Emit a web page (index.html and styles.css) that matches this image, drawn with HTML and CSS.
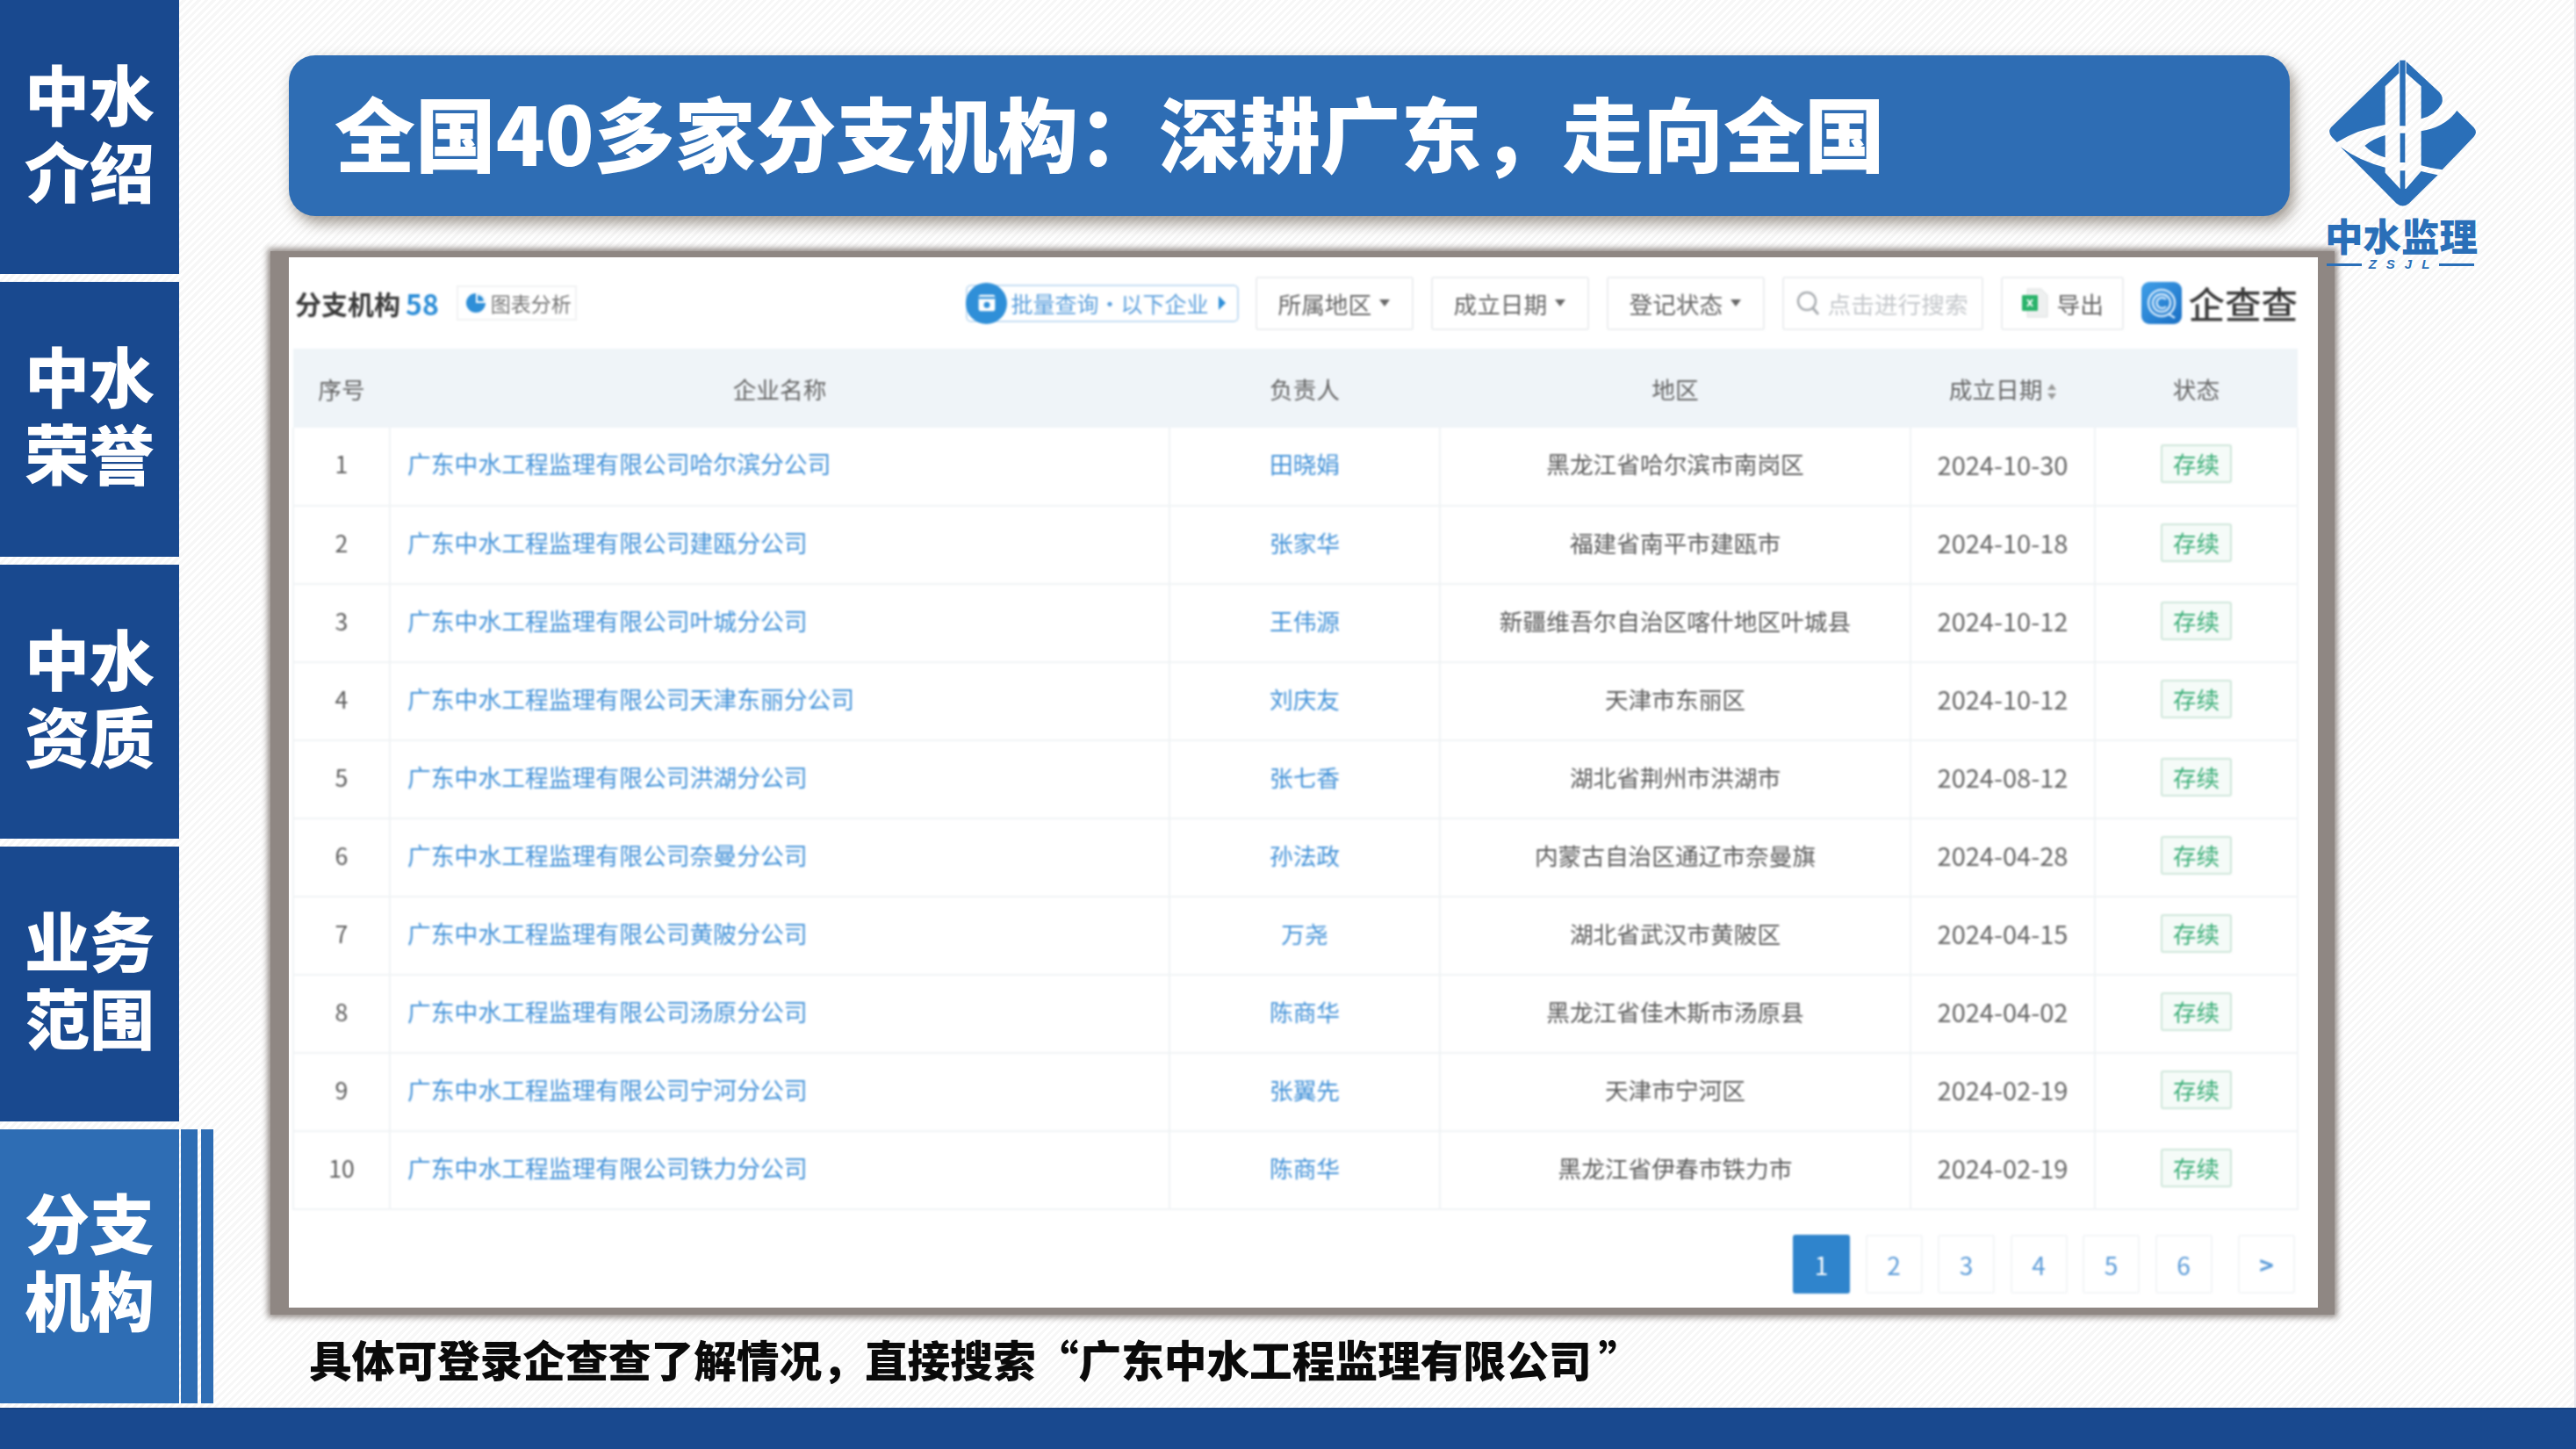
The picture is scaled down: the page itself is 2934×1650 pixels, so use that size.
FILE: index.html
```html
<!DOCTYPE html>
<html lang="zh-CN">
<head>
    <meta charset="UTF-8">
    <title>分支机构</title>
    <link rel="stylesheet" href="styles.css">
</head>
<body>
<div class="slide">
    <div class="content">
        <div class="sidebar">
            <div class="nav-row"><div class="nav-item">中水<br>介绍</div></div>
            <div class="nav-row"><div class="nav-item">中水<br>荣誉</div></div>
            <div class="nav-row"><div class="nav-item">中水<br>资质</div></div>
            <div class="nav-row"><div class="nav-item">业务<br>范围</div></div>
            <div class="nav-row active">
                <div class="nav-item">分支<br>机构</div>
                <div class="strip strip-wide"></div>
                <div class="strip strip-narrow"></div>
            </div>
        </div>

        <div class="main">
            <div class="header">
                <h1 class="title">全国40多家分支机构：深耕广东，走向全国</h1>
                <div class="logo">
                    <svg class="logo-mark" viewBox="0 0 185 185" width="185" height="185">
                        <g fill="#2a6fb8" transform="scale(0.3333)">
                            <path d="M262 30 L30 255 Q18 270 32 287 L50 306 Q120 262 215 246 L215 115 L262 70 Z"/>
                            <rect x="265" y="26" width="19" height="224"/>
                            <rect x="266" y="275" width="17" height="100"/>
                            <rect x="266" y="403" width="17" height="90"/>
                            <path d="M287 30 L287 70 L338 115 L338 226 Q385 215 408 175 Q416 152 400 135 Z"/>
                            <path d="M338 268 Q420 255 460 198 L518 256 Q532 272 518 287 L410 400 Q370 395 338 385 Z"/>
                            <path d="M145 318 Q170 295 215 282 L215 358 Q170 345 145 318 Z"/>
                            <path d="M62 322 Q130 372 215 392 L215 410 L266 465 L286 465 L338 405 Q365 412 395 418 L296 515 Q275 532 254 515 Z"/>
                        </g>
                    </svg>
                    <div class="logo-name">中水监理</div>
                    <div class="logo-sub"><i></i><span>ZSJL</span><i></i></div>
                </div>
            </div>

            <div class="shot">
                <div class="shot-inner">
                    <div class="toolbar">
                        <div class="toolbar-left">
                            <span class="section-name">分支机构</span>
                            <span class="section-count">58</span>
                            <span class="chart-chip">
                                <svg viewBox="0 0 24 24" width="24" height="24">
                                    <circle cx="12" cy="12" r="11" fill="#2f8fd8"/>
                                    <path d="M12 12 L12 1 A11 11 0 0 1 23 12 Z" fill="#fff"/>
                                    <path d="M14 10 L14 3 A8 8 0 0 1 21 10 Z" fill="#2f8fd8"/>
                                </svg>
                                图表分析
                            </span>
                        </div>
                        <div class="toolbar-right">
                            <div class="batch">
                                <span class="batch-icon">
                                    <svg viewBox="0 0 24 24" width="28" height="28">
                                        <rect x="4" y="4" width="16" height="16" rx="2" fill="#fff"/>
                                        <rect x="4" y="6" width="16" height="2" fill="#2f8fd8"/>
                                        <circle cx="12" cy="14" r="3" fill="#2f8fd8"/>
                                    </svg>
                                </span>
                                <span class="batch-text">批量查询·以下企业</span>
                                <span class="batch-arrow"></span>
                            </div>
                            <div class="tool-btn select">所属地区<span class="caret"></span></div>
                            <div class="tool-btn select">成立日期<span class="caret"></span></div>
                            <div class="tool-btn select">登记状态<span class="caret"></span></div>
                            <div class="tool-btn search">
                                <svg viewBox="0 0 28 28" width="28" height="28">
                                    <circle cx="13" cy="12" r="10" fill="none" stroke="#a9adb1" stroke-width="2.5"/>
                                    <path d="M20 20 L26 27" stroke="#a9adb1" stroke-width="3"/>
                                </svg>
                                点击进行搜索
                            </div>
                            <div class="tool-btn export">
                                <svg viewBox="0 0 30 34" width="30" height="34">
                                    <path d="M6 1 H22 L29 8 V33 H6 Z" fill="#eef0f0" stroke="#dcdfdf"/>
                                    <rect x="0" y="8" width="18" height="18" rx="1" fill="#2bb36b"/>
                                    <path d="M6 13 L12 21 M12 13 L6 21" stroke="#fff" stroke-width="2"/>
                                </svg>
                                导出
                            </div>
                            <div class="brand">
                                <span class="brand-icon">
                                    <svg viewBox="0 0 46 48" width="46" height="48">
                                        <g fill="none" stroke="#cfe6fa" stroke-width="2.5">
                                            <circle cx="23" cy="24" r="15"/>
                                            <circle cx="23" cy="24" r="10"/>
                                            <path d="M28 20 A6 6 0 1 0 28 28"/>
                                            <path d="M30 36 L38 41"/>
                                        </g>
                                    </svg>
                                </span>
                                <span class="brand-name">企查查</span>
                            </div>
                        </div>
                    </div>

                    <table class="branch-table">
                        <colgroup>
                            <col class="col-no"><col class="col-name"><col class="col-person"><col class="col-area"><col class="col-date"><col class="col-state">
                        </colgroup>
                        <thead>
                            <tr>
                                <th>序号</th>
                                <th>企业名称</th>
                                <th>负责人</th>
                                <th>地区</th>
                                <th>成立日期<svg class="sort" viewBox="0 0 10 18" width="10" height="18"><path d="M5 0 L10 7 H0 Z M0 11 H10 L5 18 Z" fill="#9a9a9a"/></svg></th>
                                <th>状态</th>
                            </tr>
                        </thead>
                        <tbody>
                            <tr><td>1</td><td class="name">广东中水工程监理有限公司哈尔滨分公司</td><td class="person">田晓娟</td><td>黑龙江省哈尔滨市南岗区</td><td class="date">2024-10-30</td><td><span class="tag">存续</span></td></tr>
                            <tr><td>2</td><td class="name">广东中水工程监理有限公司建瓯分公司</td><td class="person">张家华</td><td>福建省南平市建瓯市</td><td class="date">2024-10-18</td><td><span class="tag">存续</span></td></tr>
                            <tr><td>3</td><td class="name">广东中水工程监理有限公司叶城分公司</td><td class="person">王伟源</td><td>新疆维吾尔自治区喀什地区叶城县</td><td class="date">2024-10-12</td><td><span class="tag">存续</span></td></tr>
                            <tr><td>4</td><td class="name">广东中水工程监理有限公司天津东丽分公司</td><td class="person">刘庆友</td><td>天津市东丽区</td><td class="date">2024-10-12</td><td><span class="tag">存续</span></td></tr>
                            <tr><td>5</td><td class="name">广东中水工程监理有限公司洪湖分公司</td><td class="person">张七香</td><td>湖北省荆州市洪湖市</td><td class="date">2024-08-12</td><td><span class="tag">存续</span></td></tr>
                            <tr><td>6</td><td class="name">广东中水工程监理有限公司奈曼分公司</td><td class="person">孙法政</td><td>内蒙古自治区通辽市奈曼旗</td><td class="date">2024-04-28</td><td><span class="tag">存续</span></td></tr>
                            <tr><td>7</td><td class="name">广东中水工程监理有限公司黄陂分公司</td><td class="person">万尧</td><td>湖北省武汉市黄陂区</td><td class="date">2024-04-15</td><td><span class="tag">存续</span></td></tr>
                            <tr><td>8</td><td class="name">广东中水工程监理有限公司汤原分公司</td><td class="person">陈商华</td><td>黑龙江省佳木斯市汤原县</td><td class="date">2024-04-02</td><td><span class="tag">存续</span></td></tr>
                            <tr><td>9</td><td class="name">广东中水工程监理有限公司宁河分公司</td><td class="person">张翼先</td><td>天津市宁河区</td><td class="date">2024-02-19</td><td><span class="tag">存续</span></td></tr>
                            <tr><td>10</td><td class="name">广东中水工程监理有限公司铁力分公司</td><td class="person">陈商华</td><td>黑龙江省伊春市铁力市</td><td class="date">2024-02-19</td><td><span class="tag">存续</span></td></tr>
                        </tbody>
                    </table>

                    <div class="pager">
                        <span class="page current">1</span>
                        <span class="page">2</span>
                        <span class="page">3</span>
                        <span class="page">4</span>
                        <span class="page">5</span>
                        <span class="page">6</span>
                        <span class="page next">&gt;</span>
                    </div>
                </div>
            </div>

            <p class="note">具体可登录企查查了解情况，直接搜索<span class="quote-open">“</span>广东中水工程监理有限公司<span class="quote-close">”</span></p>
        </div>
    </div>
    <div class="footer"></div>
</div>
</body>
</html>
```

FILE: styles.css
```css
html, body {
    margin: 0;
    padding: 0;
}

body {
    font-family: "Noto Sans CJK SC", "Noto Sans", sans-serif;
    background: #fff;
}

.slide {
    width: 2934px;
    height: 1650px;
    display: flex;
    flex-direction: column;
    overflow: hidden;
    background: repeating-linear-gradient(135deg, #fff 0 3px, #f7f7f7 3px 6px);
}

.content {
    height: 1603px;
    display: flex;
    border-right: 2px solid #e8e8ee;
    box-sizing: border-box;
}

.footer {
    height: 47px;
    background: #19498f;
    border-top: 2px solid #16407f;
    box-sizing: border-box;
}

/* left navigation */
.sidebar {
    width: 243px;
    height: 1598px;
    display: flex;
    flex-direction: column;
    gap: 9px;
    flex-shrink: 0;
}

.nav-row {
    flex: 1;
    display: flex;
}

.nav-item {
    width: 204px;
    box-sizing: border-box;
    padding-bottom: 15px;
    background: #19498f;
    color: #fff;
    font-size: 74px;
    font-weight: 900;
    line-height: 88px;
    display: flex;
    align-items: center;
    justify-content: center;
    text-align: center;
}

.active .nav-item {
    background: #2e6db4;
}

.strip {
    background: #2e6db4;
}

.strip-wide {
    width: 19px;
    margin-left: 2px;
}

.strip-narrow {
    width: 14px;
    margin-left: 4px;
}

/* header */
.main {
    padding-left: 62px;
    flex: 1;
}

.header {
    display: flex;
    height: 286px;
    padding-top: 63px;
    box-sizing: border-box;
}

.title {
    width: 2279px;
    height: 183px;
    margin: 0 0 0 24px;
    padding-left: 52px;
    box-sizing: border-box;
    background: #2e6db4;
    border-radius: 30px;
    box-shadow: 5px 8px 16px rgba(70, 55, 40, 0.5);
    color: #fff;
    font-size: 91.9px;
    font-weight: 900;
    line-height: 171px;
    white-space: nowrap;
}

.logo {
    position: relative;
    z-index: 2;
    width: 180px;
    margin-left: 37px;
    margin-top: -3px;
    color: #2a6fb8;
    height: 260px;
}

.logo-mark {
    display: block;
}

.logo-name {
    width: 180px;
    margin: 3px 0 0 3px;
    font-size: 43.5px;
    font-weight: 900;
    line-height: 40px;
    white-space: nowrap;
}

.logo-sub {
    display: flex;
    align-items: center;
    margin: 3px 0 0 5px;
    width: 168px;
    gap: 8px;
}

.logo-sub i {
    flex: 1;
    height: 3px;
    background: #2a6fb8;
}

.logo-sub span {
    font-family: "Liberation Sans", sans-serif;
    font-size: 15px;
    font-weight: 700;
    font-style: italic;
    letter-spacing: 11px;
    margin-right: -8px;
    line-height: 20px;
}

/* screenshot card */
.shot {
    width: 2351px;
    height: 1211px;
    margin: 0 0 3px 3px;
    box-sizing: border-box;
    border-style: solid;
    border-color: #8f8783;
    border-width: 7px 19px 8px 21px;
    box-shadow: 0 0 7px 3px #8f8783;
    background: #fff;
}

.shot-inner {
    padding: 0 23px 0 4px;
    filter: blur(0.8px);
    color: #666;
    font-size: 26.7px;
}

.toolbar {
    height: 104px;
    display: flex;
    align-items: center;
    justify-content: space-between;
    box-sizing: border-box;
}

.toolbar-left,
.toolbar-right {
    display: flex;
    align-items: center;
}

.section-name {
    margin-left: 3px;
    font-size: 30px;
    font-weight: 700;
    color: #3b3b3b;
}

.section-count {
    margin-left: 6px;
    font-size: 32px;
    font-weight: 700;
    color: #2f8fd8;
}

.chart-chip {
    margin-left: 20px;
    height: 40px;
    width: 137px;
    box-sizing: border-box;
    border: 2px solid #f1f2f3;
    display: flex;
    align-items: center;
    gap: 5px;
    padding-left: 8px;
    font-size: 23px;
    color: #777;
    white-space: nowrap;
}

.batch {
    position: relative;
    width: 311px;
    height: 43px;
    margin-right: 19px;
    box-sizing: border-box;
    border: 2px solid #c6def3;
    border-radius: 6px;
    display: flex;
    align-items: center;
    padding-left: 49px;
    color: #5b9fdc;
    font-size: 25px;
    white-space: nowrap;
}

.batch-icon {
    position: absolute;
    left: -2px;
    top: -4px;
    width: 47px;
    height: 47px;
    border-radius: 50%;
    background: #2f8fd8;
    display: flex;
    align-items: center;
    justify-content: center;
}

.batch-arrow {
    margin-left: 11px;
    border-left: 8px solid #2f8fd8;
    border-top: 8px solid transparent;
    border-bottom: 8px solid transparent;
}

.tool-btn {
    height: 61px;
    box-sizing: border-box;
    border: 2px solid #eceef0;
    border-radius: 3px;
    display: flex;
    align-items: center;
    margin-right: 20px;
    white-space: nowrap;
}

.select {
    width: 180px;
    padding-left: 23px;
}

.caret {
    margin-left: 9px;
    border-top: 8px solid #666;
    border-left: 6px solid transparent;
    border-right: 6px solid transparent;
}

.search {
    width: 229px;
    padding-left: 13px;
    gap: 8px;
    color: #c5c8cc;
}

.export {
    width: 140px;
    padding-left: 22px;
    gap: 9px;
}

.brand {
    display: flex;
    align-items: center;
    gap: 7px;
}

.brand-icon {
    width: 46px;
    height: 48px;
    border-radius: 9px;
    background: linear-gradient(135deg, #3f9fe8, #1a6fc4);
    display: block;
}

.brand-name {
    font-size: 41.5px;
    font-weight: 500;
    line-height: 48px;
    color: #3a3a3a;
    white-space: nowrap;
}

/* table */
.branch-table {
    width: 2283px;
    table-layout: fixed;
    border-collapse: collapse;
}

.col-no { width: 110px; }
.col-name { width: 888px; }
.col-person { width: 308px; }
.col-area { width: 536px; }
.col-date { width: 210px; }
.col-state { width: 231px; }

.branch-table th {
    height: 90px;
    padding: 0;
    background: #eff4f8;
    font-weight: 400;
    color: #666;
}

.branch-table td {
    height: 89px;
    padding: 0 0 7px;
    text-align: center;
    border: 2px solid #f0f3f5;
    border-top: 0;
    box-sizing: border-box;
    color: #5c5c5c;
}

.branch-table td.name {
    text-align: left;
    padding-left: 19px;
    color: #4392d8;
    font-size: 26.8px;
}

.branch-table td.person {
    color: #4392d8;
}

.branch-table td.date {
    font-size: 29px;
    color: #666;
}

.sort {
    margin-left: 6px;
    vertical-align: -1px;
}

.tag {
    display: inline-block;
    width: 81px;
    height: 44px;
    box-sizing: border-box;
    border: 2px solid #cfe6da;
    border-radius: 3px;
    background: #f5fbf8;
    color: #3cae78;
    font-size: 26.5px;
    line-height: 40px;
    vertical-align: middle;
}

/* pagination */
.pager {
    display: flex;
    justify-content: flex-end;
    gap: 17.5px;
    margin-top: 28px;
    padding-right: 3px;
    padding-bottom: 17px;
}

.page {
    width: 65px;
    height: 67px;
    box-sizing: border-box;
    border: 2px solid #f3f5f7;
    border-radius: 3px;
    display: flex;
    align-items: center;
    justify-content: center;
    color: #5b9bd8;
    font-size: 28px;
}

.page.current {
    background: #2f84cc;
    border-color: #2f84cc;
    color: #fff;
}

.page.next {
    margin-left: 12px;
    font-weight: 700;
}

/* bottom note */
.note {
    margin: 20px 0 0 47px;
    font-size: 48.7px;
    font-weight: 900;
    line-height: 60px;
    color: #0a0a0a;
    white-space: nowrap;
}

.quote-open,
.quote-close {
    display: inline-block;
    width: 1em;
}

.quote-open {
    text-align: right;
}

.quote-close {
    padding-left: 8px;
}
```
